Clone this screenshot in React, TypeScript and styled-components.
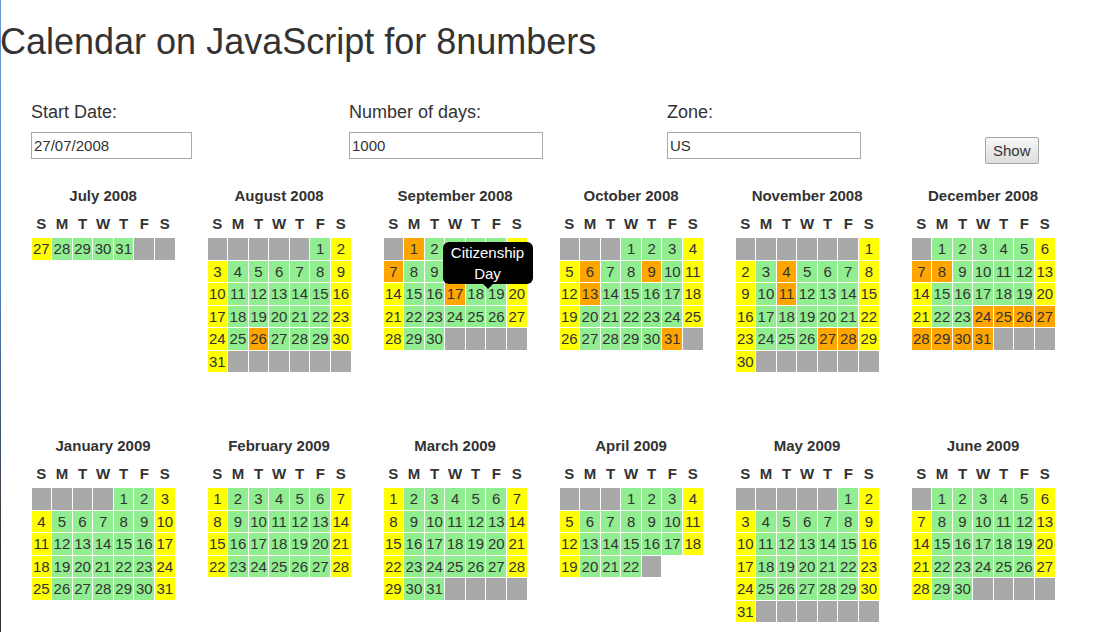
import React from 'react';
import styled, { createGlobalStyle } from 'styled-components';

const GlobalStyle = createGlobalStyle`
	html, body {
		height: 100%;
	}
	body {
		margin: 0;
		font-family: 'Liberation Sans', Arial, sans-serif;
		color: #333;
		background: linear-gradient(to bottom, #6a9ad6 0%, #4f7fbd 45%, #3a3f48 80%, #2e2e2e 100%) no-repeat left top / 1px 100%;
	}
`;

const Title = styled.h1`
	margin: 21px 0 0;
	font-size: 36px;
	line-height: 41px;
	font-weight: normal;
	color: #333;
`;

const Controls = styled.div`
	display: grid;
	grid-template-columns: 318px 318px 318px auto;
	align-items: start;
	margin-top: 40px;
	padding-left: 31px;
`;

const Field = styled.div`
	display: flex;
	flex-direction: column;
	align-items: flex-start;
`;

const Label = styled.label`
	font-size: 18px;
	line-height: 21px;
	margin-bottom: 9px;
`;

const Input = styled.input<{ $width: number }>`
	box-sizing: border-box;
	width: ${(props) => props.$width}px;
	height: 27px;
	padding: 0 2px;
	border: 1px solid #a9a9a9;
	font-family: inherit;
	font-size: 15px;
	color: #333;
	outline: none;
`;

const ShowButton = styled.button`
	margin-top: 34.5px;
	height: 27px;
	padding: 0 7px;
	border: 1px solid #a6a6a6;
	border-radius: 2px;
	background: linear-gradient(to bottom, #f8f8f8, #dddddd);
	font-family: inherit;
	font-size: 15px;
	color: #333;
	justify-self: start;
`;

const MonthGrid = styled.div`
	display: grid;
	grid-template-columns: repeat(6, 176px);
	grid-auto-rows: 250px;
	margin-top: 23.5px;
	padding-left: 30.5px;
`;

const Month = styled.div`
	position: relative;
`;

const Table = styled.table`
	border-collapse: separate;
	border-spacing: 1.5px;
`;

const Caption = styled.caption`
	font-size: 15px;
	font-weight: bold;
	line-height: 17px;
	padding-bottom: 5px;
	text-align: center;
`;

const DayHead = styled.th`
	height: 27px;
	padding: 0;
	font-size: 15px;
	font-weight: bold;
	text-align: center;
`;

const colors = {
	empty: '#a9a9a9',
	work: '#90ee90',
	weekend: '#ffff00',
	holiday: '#ffa500',
};

type Kind = keyof typeof colors;

const Day = styled.td<{ $kind: Kind }>`
	width: 19.6px;
	height: 21.5px;
	padding: 1px 0 0;
	box-sizing: border-box;
	font-size: 15px;
	line-height: 20px;
	text-align: center;
	background: ${(props) => colors[props.$kind]};
`;

const Tooltip = styled.div`
	position: absolute;
	left: 60px;
	top: 55px;
	box-sizing: border-box;
	width: 90px;
	padding: 0 5px;
	background: #000;
	color: #fff;
	border-radius: 6px;
	font-size: 15px;
	line-height: 21px;
	text-align: center;
	&::after {
		content: '';
		position: absolute;
		left: 50%;
		bottom: -5px;
		margin-left: -5px;
		border-left: 5px solid transparent;
		border-right: 5px solid transparent;
		border-top: 5px solid #000;
	}
`;

type MonthInfo = {
	year: number;
	month: number;
	start?: number;
	end?: number;
	trailing?: number;
	tooltip?: string;
};

const MONTH_NAMES = ['January', 'February', 'March', 'April', 'May', 'June', 'July', 'August', 'September', 'October', 'November', 'December'];
const WEEK = ['S', 'M', 'T', 'W', 'T', 'F', 'S'];

const months: MonthInfo[] = [
	{ year: 2008, month: 6, start: 27 },
	{ year: 2008, month: 7 },
	{ year: 2008, month: 8, tooltip: 'Citizenship Day' },
	{ year: 2008, month: 9 },
	{ year: 2008, month: 10 },
	{ year: 2008, month: 11 },
	{ year: 2009, month: 0 },
	{ year: 2009, month: 1 },
	{ year: 2009, month: 2 },
	{ year: 2009, month: 3, end: 22, trailing: 1 },
	{ year: 2009, month: 4 },
	{ year: 2009, month: 5 },
];

const holidays = new Set<string>([
	'2008-8-26',
	'2008-9-1', '2008-9-7', '2008-9-17',
	'2008-10-6', '2008-10-9', '2008-10-13', '2008-10-31',
	'2008-11-4', '2008-11-11', '2008-11-27', '2008-11-28',
	'2008-12-7', '2008-12-8',
	'2008-12-24', '2008-12-25', '2008-12-26', '2008-12-27', '2008-12-28', '2008-12-29', '2008-12-30', '2008-12-31',
]);

type Cell = { day?: number; kind: Kind };

function buildRows(m: MonthInfo): Cell[][] {
	const first = m.start ?? 1;
	const last = m.end ?? new Date(m.year, m.month + 1, 0).getDate();
	const cells: Cell[] = [];
	const lead = new Date(m.year, m.month, first).getDay();
	for (let i = 0; i < lead; i++) cells.push({ kind: 'empty' });
	for (let d = first; d <= last; d++) {
		const wd = new Date(m.year, m.month, d).getDay();
		let kind: Kind = wd === 0 || wd === 6 ? 'weekend' : 'work';
		if (holidays.has(`${m.year}-${m.month + 1}-${d}`)) kind = 'holiday';
		cells.push({ day: d, kind });
	}
	const trail = m.trailing ?? (7 - (cells.length % 7)) % 7;
	for (let i = 0; i < trail; i++) cells.push({ kind: 'empty' });
	const rows: Cell[][] = [];
	for (let i = 0; i < cells.length; i += 7) rows.push(cells.slice(i, i + 7));
	return rows;
}

function MonthTable({ info }: { info: MonthInfo }) {
	const rows = buildRows(info);
	return (
		<Month>
			<Table>
				<Caption>{MONTH_NAMES[info.month]} {info.year}</Caption>
				<thead>
					<tr>
						{WEEK.map((w, i) => <DayHead key={i}>{w}</DayHead>)}
					</tr>
				</thead>
				<tbody>
					{rows.map((row, r) => (
						<tr key={r}>
							{row.map((c, i) => <Day key={i} $kind={c.kind}>{c.day ?? ''}</Day>)}
						</tr>
					))}
				</tbody>
			</Table>
			{info.tooltip && <Tooltip>{info.tooltip}</Tooltip>}
		</Month>
	);
}

function App() {
	return (
		<>
			<GlobalStyle />
			<Title>Calendar on JavaScript for 8numbers</Title>
			<Controls>
				<Field>
					<Label>Start Date:</Label>
					<Input $width={161} defaultValue="27/07/2008" />
				</Field>
				<Field>
					<Label>Number of days:</Label>
					<Input $width={194} defaultValue="1000" />
				</Field>
				<Field>
					<Label>Zone:</Label>
					<Input $width={194} defaultValue="US" />
				</Field>
				<ShowButton>Show</ShowButton>
			</Controls>
			<MonthGrid>
				{months.map((m) => <MonthTable key={`${m.year}-${m.month}`} info={m} />)}
			</MonthGrid>
		</>
	);
}

export default App;
